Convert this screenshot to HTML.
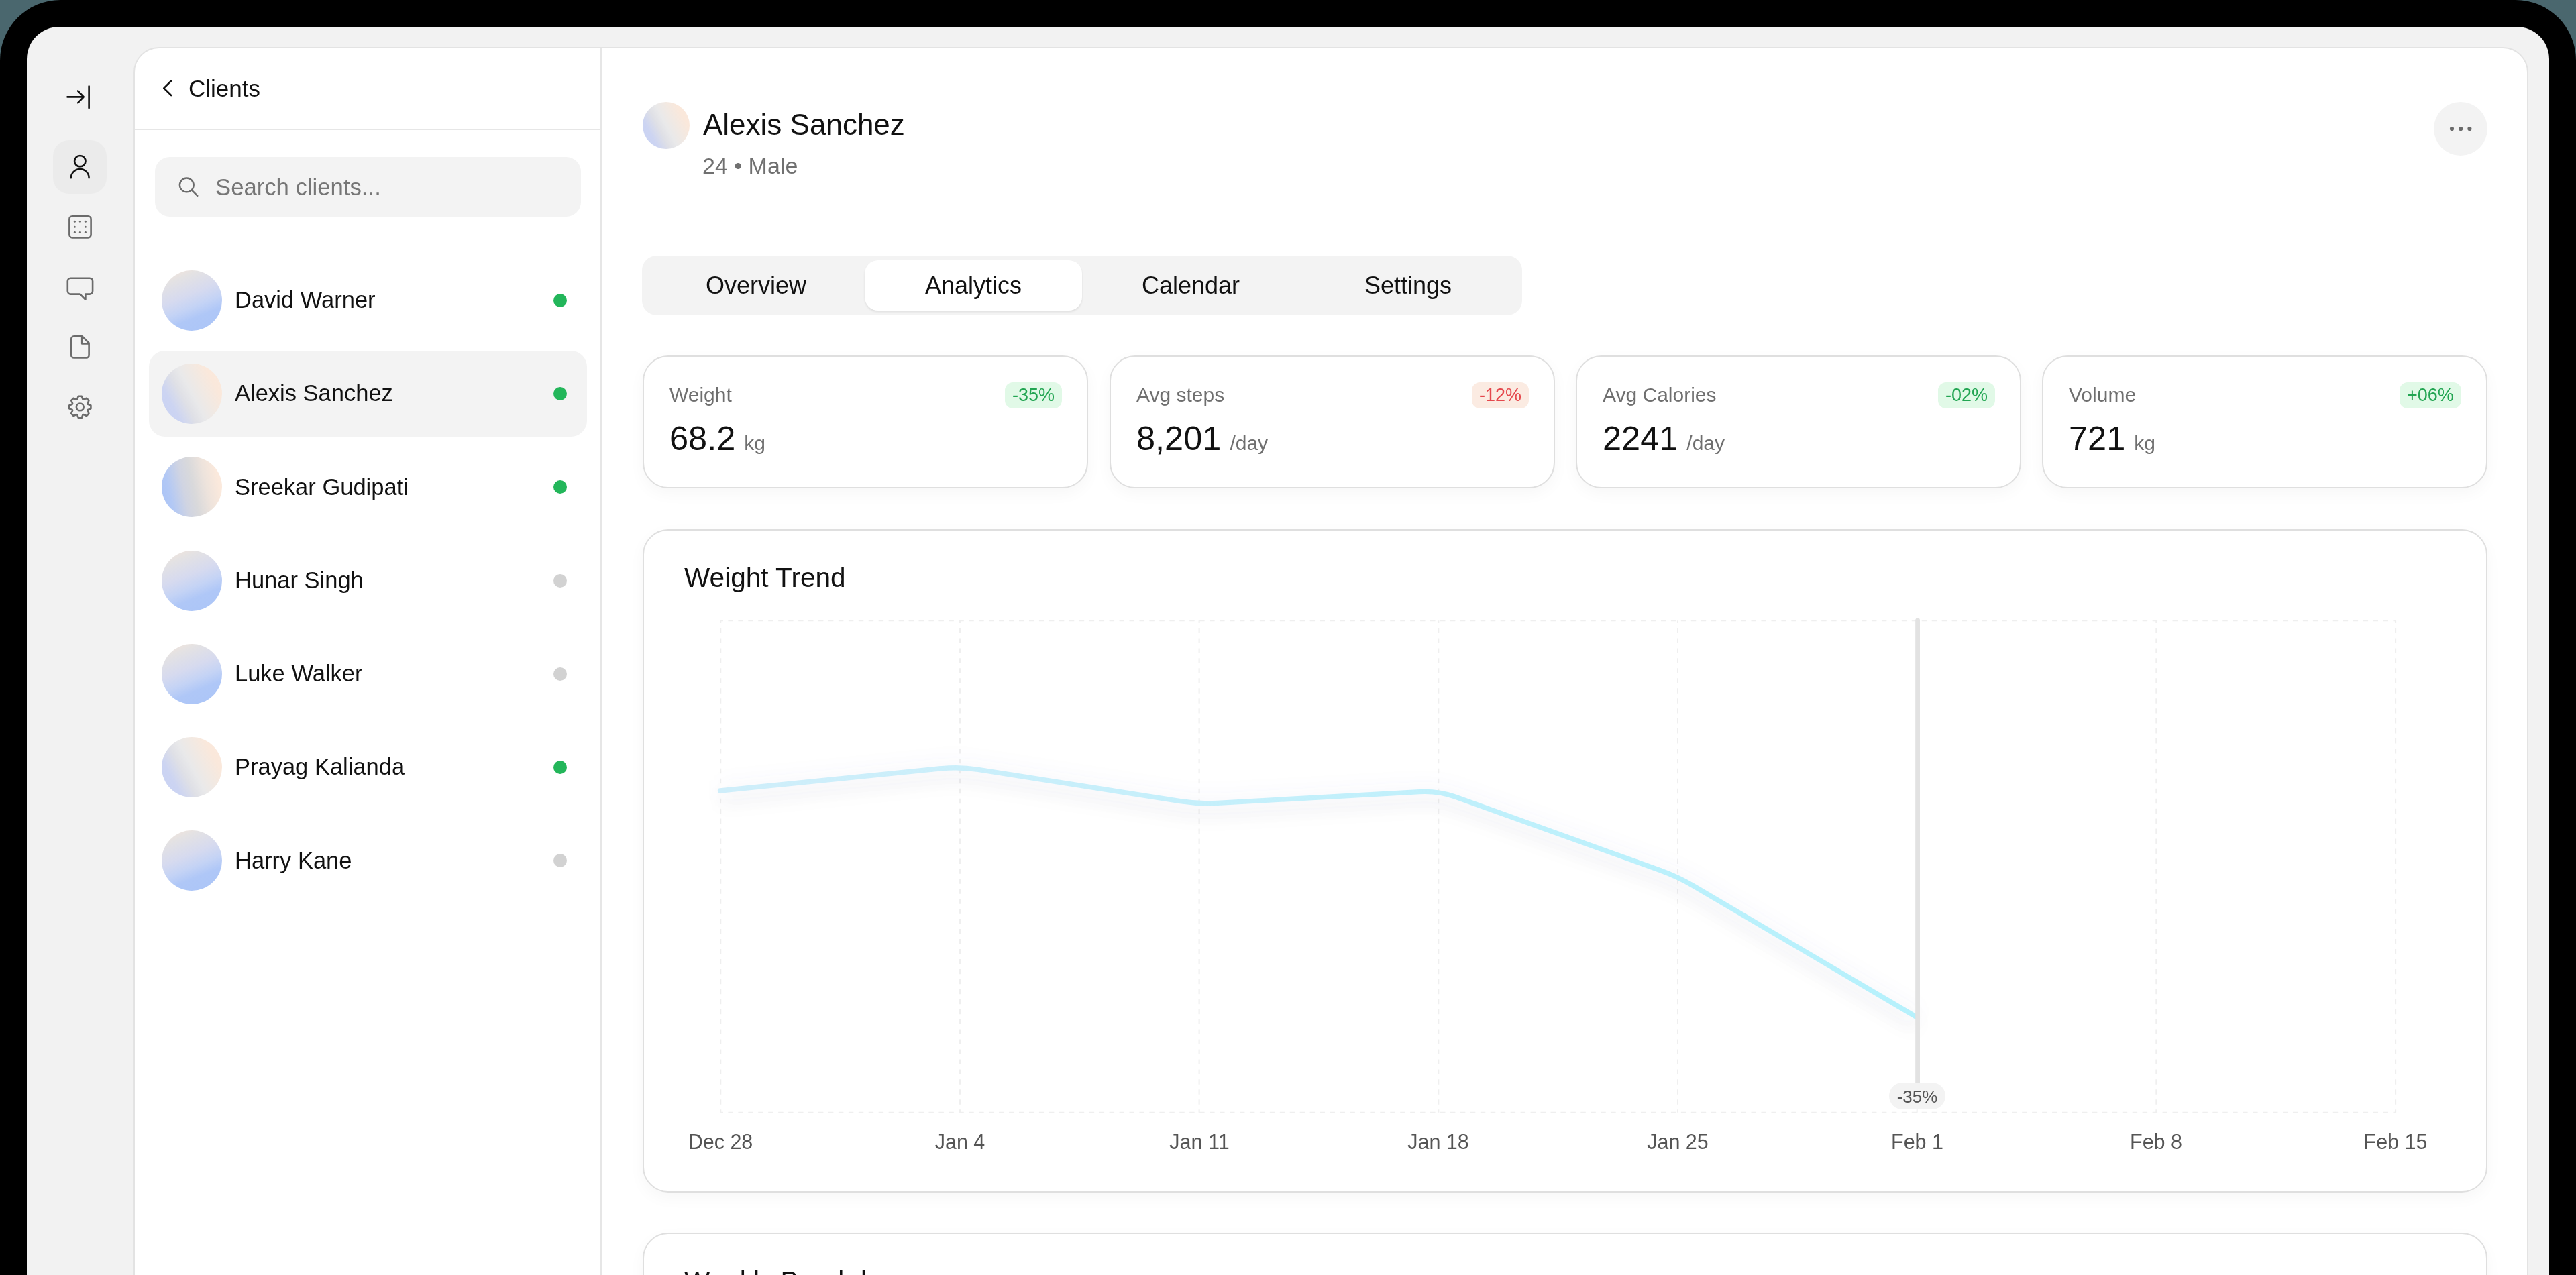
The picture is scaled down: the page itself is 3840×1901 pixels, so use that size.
<!DOCTYPE html>
<html><head><meta charset="utf-8"><title>Clients - Alexis Sanchez</title>
<style>
*{box-sizing:border-box;margin:0;padding:0}
html,body{width:3840px;height:1901px;overflow:hidden;-webkit-font-smoothing:antialiased;background:#4a676e;font-family:"Liberation Sans",sans-serif;color:#111}
.a{position:absolute}
.t{position:absolute;white-space:nowrap;line-height:1;will-change:transform}
#bezel{left:0;top:0;width:3840px;height:1901px;background:#000;border-radius:90px 90px 0 0}
#screen{left:40px;top:40px;width:3760px;height:1861px;background:#f2f2f2;border-radius:48px 48px 0 0}
#panel{left:199px;top:70px;width:3570px;height:1900px;background:#fff;border:2px solid #e3e3e3;border-radius:38px 38px 0 0}
.tile{left:79px;top:209px;width:80px;height:80px;border-radius:24px;background:#ebebeb}
.vline{left:895px;top:71px;width:3px;height:1840px;background:#e6e6e6}
.hline{left:201px;top:192px;width:694px;height:2px;background:#e6e6e6}
.search{left:231px;top:234px;width:635px;height:89px;border-radius:22px;background:#f3f3f3}
.row-sel{left:222px;top:523px;width:653px;height:128px;border-radius:24px;background:#f3f3f3}
.av{position:absolute;width:90px;height:90px;border-radius:50%}
.avA{background:linear-gradient(158deg,#f7e5d8 0%,#e4e2e3 18%,#d6daef 42%,#c4d3f5 58%,#afc7f7 72%,#abc5f7 100%)}
.avB{background:linear-gradient(62deg,#c8d2f4 0%,#ccd4f2 22%,#dfe0e6 38%,#e9e9ea 50%,#f1e9e3 64%,#fae8db 80%,#fbe9dd 100%)}
.avC{background:linear-gradient(78deg,#a8c2f7 0%,#b2c8f5 18%,#d0d4e2 38%,#d9d9db 52%,#ede3dc 70%,#fbe9dc 88%,#fbe9dd 100%)}
.name{font-size:34.5px;color:#111}
.dot{position:absolute;width:20px;height:20px;border-radius:50%}
.on{background:#23b65a}.off{background:#d2d2d2}
.tabs{left:957px;top:381px;width:1312px;height:89px;border-radius:22px;background:#f3f3f3}
.tab-act{left:1289px;top:388px;width:324px;height:75px;border-radius:20px;background:#fff;box-shadow:0 2px 3px rgba(0,0,0,0.09)}
.tab{font-size:36px;color:#111;width:324px;text-align:center}
.card{position:absolute;background:#fff;border:2px solid #dfdfdf;border-radius:38px;box-shadow:0 8px 24px rgba(0,0,0,0.035)}
.stat{top:530px;width:664px;height:198px}
.slabel{font-size:30px;color:#6f6f6f}
.sval{font-size:50.5px;color:#111}
.sunit{font-size:30px;color:#6f6f6f}
.badge{position:absolute;will-change:transform;top:38px;right:37px;height:39px;border-radius:12px;padding:0 11px;font-size:27px;line-height:39px;white-space:nowrap}
.bg{background:#e1f9e7;color:#22a552}
.br{background:#fbebe2;color:#e5484d}
.xl{font-size:30.5px;color:#555;width:200px;text-align:center}
</style></head><body>
<div id="bezel" class="a"></div>
<div id="screen" class="a"></div>
<div id="panel" class="a"></div>

<!-- sidebar -->
<div class="a tile"></div>
<svg class="a" style="left:0;top:0" width="200" height="700" viewBox="0 0 200 700">
 <g fill="none" stroke="#111" stroke-width="2.6" stroke-linecap="round" stroke-linejoin="round">
  <path d="M100.5 144.4H124.6M116.1 135.5L124.8 144.4L116.1 153.3M132.6 128.5V161"/>
  <circle cx="119.3" cy="240.2" r="8.2"/>
  <path d="M105.9 265.3A13.35 13.35 0 0 1 132.6 265.3"/>
 </g>
 <g fill="none" stroke="#6b6b6b" stroke-width="2.6" stroke-linecap="round" stroke-linejoin="round">
  <rect x="103.4" y="322.2" width="32.2" height="32.2" rx="4.4"/>
  <path d="M106 414.7H133.6A4.5 4.5 0 0 1 138.1 419.2V434.1A4.5 4.5 0 0 1 133.6 438.6H127.4V446.8L119.4 438.6H105.3A4.5 4.5 0 0 1 100.8 434.1V419.2A4.5 4.5 0 0 1 105.3 414.7Z"/>
  <path d="M110.2 501.4H122.5L132.6 511.5V529.4A4 4 0 0 1 128.6 533.4H110.2A4 4 0 0 1 106.2 529.4V505.4A4 4 0 0 1 110.2 501.4ZM122.2 501.6V512.4H132.4"/>
  <circle cx="119.3" cy="606.9" r="5.4"/>
 </g>
 <g fill="#6b6b6b">
  <circle cx="111.4" cy="330.3" r="1.5"/><circle cx="119.4" cy="330.3" r="1.5"/><circle cx="127.4" cy="330.3" r="1.5"/>
  <circle cx="111.4" cy="338.3" r="1.5"/><circle cx="127.4" cy="338.3" r="1.5"/>
  <circle cx="111.4" cy="346.2" r="1.5"/><circle cx="119.4" cy="346.2" r="1.5"/><circle cx="127.4" cy="346.2" r="1.5"/>
 </g>
 <path id="gear" fill="none" stroke="#6b6b6b" stroke-width="2.6" stroke-linejoin="round" d="M115.16 595.21L116.86 590.78L121.74 590.78L123.44 595.21L124.64 595.71L128.97 593.78L132.42 597.23L130.49 601.56L130.99 602.76L135.42 604.46L135.42 609.34L130.99 611.04L130.49 612.24L132.42 616.57L128.97 620.02L124.64 618.09L123.44 618.59L121.74 623.02L116.86 623.02L115.16 618.59L113.96 618.09L109.63 620.02L106.18 616.57L108.11 612.24L107.61 611.04L103.18 609.34L103.18 604.46L107.61 602.76L108.11 601.56L106.18 597.23L109.63 593.78L113.96 595.71Z"/>
</svg>

<!-- clients panel -->
<div class="a hline"></div>
<div class="a vline"></div>
<svg class="a" style="left:0;top:0" width="900" height="320" viewBox="0 0 900 320">
 <path d="M255.2 120.5L244.3 131.3L255.2 142.1" fill="none" stroke="#111" stroke-width="2.6" stroke-linecap="round" stroke-linejoin="round"/>
</svg>
<div class="t" style="left:281px;top:113.8px;font-size:35px;color:#111">Clients</div>
<div class="a search"></div>
<svg class="a" style="left:0;top:0" width="900" height="320" viewBox="0 0 900 320">
 <g fill="none" stroke="#6b6b6b" stroke-width="2.4" stroke-linecap="round">
  <circle cx="278.3" cy="275.9" r="10.4"/>
  <path d="M286.2 283.8L294.3 291.9"/>
 </g>
</svg>
<div class="t" style="left:320.5px;top:262px;font-size:34.7px;color:#767676">Search clients...</div>

<div class="a row-sel"></div>
<div class="av avA" style="left:241px;top:402.6px"></div><div class="t name" style="left:350px;top:429.9px">David Warner</div><div class="dot on" style="left:825.3px;top:437.6px"></div>
<div class="av avB" style="left:241px;top:541.9px"></div><div class="t name" style="left:350px;top:569.2px">Alexis Sanchez</div><div class="dot on" style="left:825.3px;top:576.9px"></div>
<div class="av avC" style="left:241px;top:681.2px"></div><div class="t name" style="left:350px;top:708.5px">Sreekar Gudipati</div><div class="dot on" style="left:825.3px;top:716.2px"></div>
<div class="av avA" style="left:241px;top:820.5px"></div><div class="t name" style="left:350px;top:847.8px">Hunar Singh</div><div class="dot off" style="left:825.3px;top:855.5px"></div>
<div class="av avA" style="left:241px;top:959.8px"></div><div class="t name" style="left:350px;top:987.1px">Luke Walker</div><div class="dot off" style="left:825.3px;top:994.8px"></div>
<div class="av avB" style="left:241px;top:1099.1px"></div><div class="t name" style="left:350px;top:1126.4px">Prayag Kalianda</div><div class="dot on" style="left:825.3px;top:1134.1px"></div>
<div class="av avA" style="left:241px;top:1238.4px"></div><div class="t name" style="left:350px;top:1265.7px">Harry Kane</div><div class="dot off" style="left:825.3px;top:1273.4px"></div>


<!-- main header -->
<div class="av avB" style="left:958px;top:152px;width:70px;height:70px"></div>
<div class="t" style="left:1048px;top:164.2px;font-size:44px;color:#111">Alexis Sanchez</div>
<div class="t" style="left:1046.5px;top:230.2px;font-size:34px;color:#707070">24 • Male</div>
<div class="a" style="left:3628px;top:152px;width:80px;height:80px;border-radius:50%;background:#f3f3f3"></div>
<svg class="a" style="left:3628px;top:152px" width="80" height="80" viewBox="0 0 80 80"><g fill="#6b6b6b"><circle cx="27" cy="40" r="3.1"/><circle cx="40.2" cy="40" r="3.1"/><circle cx="53.4" cy="40" r="3.1"/></g></svg>

<!-- tabs -->
<div class="a tabs"></div>
<div class="a tab-act"></div>
<div class="t tab" style="left:965px;top:407.9px">Overview</div>
<div class="t tab" style="left:1289px;top:407.9px">Analytics</div>
<div class="t tab" style="left:1613px;top:407.9px">Calendar</div>
<div class="t tab" style="left:1937px;top:407.9px">Settings</div>

<!-- stat cards -->
<div class="card stat" style="left:958px"><div class="t slabel" style="left:38px;top:41.6px">Weight</div><div class="t" style="left:38px;top:97.0px"><span class="sval">68.2</span><span class="sunit" style="margin-left:13px">kg</span></div><div class="badge bg">-35%</div></div>
<div class="card stat" style="left:1654px"><div class="t slabel" style="left:38px;top:41.6px">Avg steps</div><div class="t" style="left:38px;top:97.0px"><span class="sval">8,201</span><span class="sunit" style="margin-left:13px">/day</span></div><div class="badge br">-12%</div></div>
<div class="card stat" style="left:2349px"><div class="t slabel" style="left:38px;top:41.6px">Avg Calories</div><div class="t" style="left:38px;top:97.0px"><span class="sval">2241</span><span class="sunit" style="margin-left:13px">/day</span></div><div class="badge bg">-02%</div></div>
<div class="card stat" style="left:3044px"><div class="t slabel" style="left:38px;top:41.6px">Volume</div><div class="t" style="left:38px;top:97.0px"><span class="sval">721</span><span class="sunit" style="margin-left:13px">kg</span></div><div class="badge bg">+06%</div></div>


<!-- chart card -->
<div class="card" style="left:958px;top:789px;width:2750px;height:989px"></div>
<div class="t" style="left:1020px;top:840.6px;font-size:40.6px;color:#111">Weight Trend</div>
<svg class="a" style="left:0;top:0" width="3840" height="1800" viewBox="0 0 3840 1800"><g fill="none" stroke="#efefef" stroke-width="2.1" stroke-dasharray="7.476 7.476" stroke-dashoffset="3.738"><path d="M1074.2 925.3H3571.1M1074.2 1658.8H3571.1"/><path d="M1074.2 925.3V1658.8"/><path d="M1430.9 925.3V1658.8"/><path d="M1787.6 925.3V1658.8"/><path d="M2144.3 925.3V1658.8"/><path d="M2501.0 925.3V1658.8"/><path d="M2857.7 925.3V1658.8"/><path d="M3214.4 925.3V1658.8"/><path d="M3571.1 925.3V1658.8"/></g><defs><filter id="sh" x="-10%" y="-50%" width="120%" height="200%"><feGaussianBlur stdDeviation="13"/></filter><linearGradient id="lg" x1="1073" y1="0" x2="2858" y2="0" gradientUnits="userSpaceOnUse"><stop offset="0" stop-color="#cfeefa"/><stop offset="1" stop-color="#b6f1fc"/></linearGradient></defs><path d="M1073.5 1179L1402.5 1145.8Q1430.4 1143 1458.1 1147.3L1759.5 1194.7Q1787.2 1199 1815.2 1197.4L2116.1 1180.6Q2144.1 1179 2170.5 1188.5L2474.6 1297.5Q2501 1307 2525.1 1321.2L2857.8 1517" fill="none" stroke="rgba(90,140,230,0.025)" stroke-width="30" filter="url(#sh)"/><path d="M1073.5 1179L1402.5 1145.8Q1430.4 1143 1458.1 1147.3L1759.5 1194.7Q1787.2 1199 1815.2 1197.4L2116.1 1180.6Q2144.1 1179 2170.5 1188.5L2474.6 1297.5Q2501 1307 2525.1 1321.2L2857.8 1517" transform="translate(0,13)" fill="none" stroke="rgba(20,30,60,0.035)" stroke-width="18" filter="url(#sh)"/><path d="M1073.5 1179L1402.5 1145.8Q1430.4 1143 1458.1 1147.3L1759.5 1194.7Q1787.2 1199 1815.2 1197.4L2116.1 1180.6Q2144.1 1179 2170.5 1188.5L2474.6 1297.5Q2501 1307 2525.1 1321.2L2857.8 1517" fill="none" stroke="url(#lg)" stroke-width="7.4" stroke-linecap="round" stroke-linejoin="round"/><path d="M2858.6 924.8V1614" stroke="#e2e2e2" stroke-width="6.8" stroke-linecap="round"/></svg>
<div class="t xl" style="left:974.2px;top:1687.2px">Dec 28</div><div class="t xl" style="left:1330.9px;top:1687.2px">Jan 4</div><div class="t xl" style="left:1687.6px;top:1687.2px">Jan 11</div><div class="t xl" style="left:2044.3px;top:1687.2px">Jan 18</div><div class="t xl" style="left:2401.0px;top:1687.2px">Jan 25</div><div class="t xl" style="left:2757.7px;top:1687.2px">Feb 1</div><div class="t xl" style="left:3114.4px;top:1687.2px">Feb 8</div><div class="t xl" style="left:3471.1px;top:1687.2px">Feb 15</div><div class="a" style="left:2815.7px;top:1614px;width:84px;height:40px;border-radius:20px;background:#f3f3f3"></div><div class="t" style="left:2757.8px;top:1622.0px;width:200px;text-align:center;font-size:26px;color:#555">-35%</div>

<!-- weekly card -->
<div class="card" style="left:958px;top:1838px;width:2750px;height:400px"></div>
<div class="t" style="left:1020px;top:1890px;font-size:40.6px;color:#111">Weekly Breakdown</div>


</body></html>
